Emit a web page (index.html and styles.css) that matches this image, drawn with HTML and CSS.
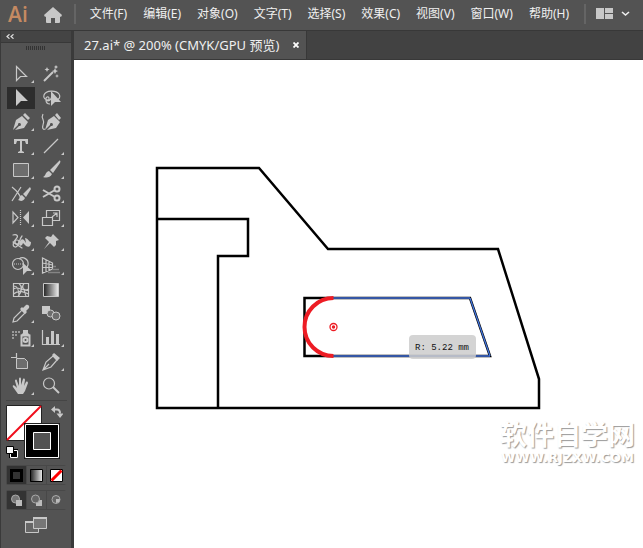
FILE: index.html
```html
<!DOCTYPE html>
<html lang="zh-CN">
<head>
<meta charset="utf-8">
<meta name="viewport" content="width=device-width, initial-scale=1">
<title>27.ai</title>
<link rel="stylesheet" href="styles.css">
</head>
<body>
<div class="app">
  <header class="menubar">
    <span class="logo">Ai</span>
    <button class="home" aria-label="主页"><svg width="18" height="16" viewBox="0 0 18 16"><path fill="#c8c8c8" d="M9 0 0 8l1 2 1-.6V15q0 1 1 1h4v-5h4v5h4q1 0 1-1V9.400l1 .6 1-2z"/></svg></button>
    <nav class="menus">
      <button>文件(F)</button><button>编辑(E)</button><button>对象(O)</button><button>文字(T)</button><button>选择(S)</button><button>效果(C)</button><button>视图(V)</button><button>窗口(W)</button><button>帮助(H)</button>
    </nav>
    <button class="workspace" aria-label="排列文档"><svg width="34" height="12" viewBox="0 0 34 12"><path fill="#c8c8c8" d="M0 0h8v11H0zM9 0h8v5H9zM9 6h8v5H9z"/><path fill="none" stroke="#eee" stroke-width="1.600" d="m26 4 3.500 3L33 4"/></svg></button>
  </header>
  <div class="body">
    <aside class="panel">
      <button class="collapse" aria-label="折叠"><svg width="8" height="5" viewBox="0 0 8 5"><path fill="none" stroke="#ddd" stroke-width="1.200" d="M3.500.3 1 2.500l2.500 2.200M7.500.3 5 2.500l2.500 2.200"/></svg></button>
      <div class="grip"></div>
      <div class="tools">
        <button aria-label="选择"><svg viewBox="0 0 30 24"><path class="l" d="M10.500 4.500v14l4-4h6z"/><path class="f" d="M28 18v3h-3z"/></svg></button>
        <button aria-label="魔棒"><svg viewBox="0 0 30 24"><path class="l w" d="m8 19 9-9"/><path class="f" d="m19 6 1 2.200L22 9l-2 1-1 2-1-2-2-1 2-.8zM11 5l.8 1.700 1.700.8-1.700.8L11 10l-.8-1.700-1.700-.8 1.700-.8zM20 3l.7 1.300L22 5l-1.300.7L20 7l-.7-1.300L18 5l1.300-.7zM21 12l.6 1.400L23 14l-1.400.6L21 16l-.6-1.400L19 14l1.400-.6z"/></svg></button>
        <button class="active" aria-label="直接选择"><svg viewBox="0 0 30 24"><path class="f" d="M10 3v17l5-5h7z"/></svg></button>
        <button aria-label="套索"><svg viewBox="0 0 30 24"><path class="l" d="M13 14c-4 0-6-2-5-5 2-5 12-5 15-1 2 3 0 5-2 6M12 15c2-2 1-5-1-4s-1 4 1 4 4-3 4-6"/><path class="l" d="M10 14c0 3 2 4 4 4"/><path class="f" d="M15 5v15l4-4h6z"/></svg></button>
        <button aria-label="钢笔"><svg viewBox="0 0 30 24"><path class="f" d="m7 20 3-10 6-4 6 6-4 6-9 2 4-4a1.500 1.500 0 1 0-1-1l-4 4zM17 5l2-2 5 5-2 2z"/><path class="f" d="M28 18v3h-3z"/></svg></button>
        <button aria-label="曲率"><svg viewBox="0 0 30 24"><path class="l" d="M7 4c-3 5 3 6 0 11-1 3 0 5 2 4"/><path class="f" d="m9 20 3-10 6-4 6 6-4 6-9 2 4-4a1.500 1.500 0 1 0-1-1l-4 4zM19 5l2-2 4 5-2 2z"/></svg></button>
        <button aria-label="文字"><svg viewBox="0 0 30 24"><path class="f" d="M8 5h14v5h-2l-1-3h-3v10l2 1v1h-6v-1l2-1V7h-3l-1 3H8z"/><path class="f" d="M28 18v3h-3z"/></svg></button>
        <button aria-label="直线段"><svg viewBox="0 0 30 24"><path class="l" d="M8 19 22 5"/><path class="f" d="M28 18v3h-3z"/></svg></button>
        <button aria-label="矩形"><svg viewBox="0 0 30 24"><path class="s" d="M7.500 5.500h15v13h-15z"/><path class="f" d="M28 18v3h-3z"/></svg></button>
        <button aria-label="画笔"><svg viewBox="0 0 30 24"><path class="f" d="m23 3-9 9 3 3 7-10c1-2 0-3-1-2zM13 13l3 3c-2 4-6 4-9 3 3-1 2-5 6-6z"/><path class="f" d="M28 18v3h-3z"/></svg></button>
        <button aria-label="Shaper"><svg viewBox="0 0 30 24"><path class="l" d="M6 5c5 4 8 7 9 12M15 5 6 19"/><path class="f" d="m24 5-7 7 3 3 5-8zM16 13l3 3c-2 4-5 3-7 2 2-1 1-4 4-5z"/><path class="f" d="M28 18v3h-3z"/></svg></button>
        <button aria-label="剪刀"><svg viewBox="0 0 30 24"><path class="l w" d="m7 8 12 7M7 15l12-7"/><circle class="l w" cx="21" cy="7" r="2.500"/><circle class="l w" cx="21" cy="16" r="2.500"/><path class="f" d="M28 18v3h-3z"/></svg></button>
        <button aria-label="镜像"><svg viewBox="0 0 30 24"><path class="l" d="M7 6v11l5-5.500z"/><path class="f" d="M23 5v13l-6-6.500z"/><path class="l d" d="M14.500 4v16"/><path class="f" d="M28 18v3h-3z"/></svg></button>
        <button aria-label="比例缩放"><svg viewBox="0 0 30 24"><path class="l" d="M10.500 12V4.500h13v10h-7M6.500 11.500h10v8h-10zM16 11l5-4m-4 0h4v4"/><path class="f" d="M28 18v3h-3z"/></svg></button>
        <button aria-label="宽度"><svg viewBox="0 0 30 24"><path class="l" stroke-linecap="round" d="M7 5c4-1 6 1 3 4s-4 7-1 8c4 1 4-8 7-11M7 12l9 6"/><circle class="l" cx="11" cy="12" r="2"/><path class="f" d="M13 14c1-4 3-6 5-4l2 3-1-5c3 0 4 4 6 4 0 4-2 6-5 4l-3-3c-1 3-3 4-4 1zM28 18v3h-3z"/></svg></button>
        <button aria-label="操控变形"><svg viewBox="0 0 30 24"><path class="f" d="m17 4 6 6-3 1v4l-2 2-4-4-6 6 5-7-4-4 2-2 4 1zM28 18v3h-3z"/></svg></button>
        <button aria-label="形状生成器"><svg viewBox="0 0 30 24"><circle class="l" cx="12" cy="10" r="5.500"/><path class="l" d="M13 5c4-3 10 0 9 6-1 3-2 4-3 5"/><path class="l d" d="M8 10h9"/><path class="f" d="M17 9v12l4-4h5zM28 18v3h-3z"/></svg></button>
        <button aria-label="透视网格"><svg viewBox="0 0 30 24"><path class="l" d="M6.500 4v15l10-4V9zM10 6v12M13 8v9M6.500 9l10 2M6.500 13.500l10 0"/><path stroke="#858585" stroke-width="1.500" d="M17 12.500h3M16 15.500h7M12 18.500h12"/><path class="f" d="M28 18v3h-3z"/></svg></button>
        <button aria-label="网格"><svg viewBox="0 0 30 24"><path class="l" d="M7.500 5.500h15v13h-15zM7.500 11c5-4 9 4 15 0M13 5.500c5 4 2 9-1 13M7.500 16c5-4 8-3 15 0M18 5.500c-3 4-1 7 4.500 7M8 8c4 0 5 4 5 10.500M19 11c-1 2 0 5 1 7"/></svg></button>
        <button aria-label="渐变"><svg viewBox="0 0 30 24"><defs><linearGradient id="ramp"><stop stop-color="#222"/><stop offset="1" stop-color="#eee"/></linearGradient></defs><path fill="url(#ramp)" stroke="#c8c8c8" d="M7.500 5.500h15v13h-15z"/></svg></button>
        <button aria-label="吸管"><svg viewBox="0 0 30 24"><path class="l" d="m7 20 1-4 8-8 3 3-8 8z"/><path class="f" d="m14 7 2-2 1 1 3-3c2-1 4 1 3 3l-3 3 1 1-2 2zM28 18v3h-3z"/></svg></button>
        <button aria-label="混合"><svg viewBox="0 0 30 24"><path class="f" d="M6 4h8v8H6z"/><circle class="s" cx="14.500" cy="11.500" r="3.500"/><circle class="s" cx="20" cy="14" r="4"/></svg></button>
        <button aria-label="符号喷枪"><svg viewBox="0 0 30 24"><path class="l w" d="M15.500 9.500h8v10h-8z"/><path class="f" d="M17 4h5v3l2 2h-9l2-2z"/><circle class="l w" cx="19.500" cy="14" r="2"/><path class="f dim" d="M6 5h2v2H6zm3 0h2v2H9zm3 0h2v2h-2zM6 8h2v2H6zm3 0h2v2H9zM6 11h2v2H6z"/><path class="f" d="M28 18v3h-3z"/></svg></button>
        <button aria-label="柱形图"><svg viewBox="0 0 30 24"><path class="l" d="M6.500 4v14.500H24"/><path class="f" d="M10 11h3v8h-3zM15 5h3v14h-3zM20 8h3v11h-3zM28 18v3h-3z"/></svg></button>
        <button aria-label="画板"><svg viewBox="0 0 30 24"><path class="l" d="M5 7.500h5.500M10.500 3v5"/><path class="s" d="M10.500 8.500h8l3 3v7h-11z"/></svg></button>
        <button aria-label="切片"><svg viewBox="0 0 30 24"><path class="l" d="m7 20 3-8 7-6 4 4-6 7zm0 0 6-6"/><path class="f" d="m16 5 2-2 6 5-3 3zM28 18v3h-3z"/></svg></button>
        <button aria-label="抓手"><svg viewBox="0 0 30 24"><path class="f" d="m12 20-5-7c-1-2 1-2 2-1l2 2-2-7c0-2 2-2 2 0l2 5V5c0-2 2-2 2 0v6l2-6c1-1 2 0 2 1l-1 6 2-4c1-1 2 0 2 1l-3 8-2 3zM28 18v3h-3z"/></svg></button>
        <button aria-label="缩放"><svg viewBox="0 0 30 24"><circle class="l" cx="13" cy="9.500" r="5.500"/><path class="l w" d="m17 13 6 6"/></svg></button>
      </div>
      <div class="paint">
        <button class="fill" aria-label="填色"><svg width="36" height="36" viewBox="0 0 36 36"><path fill="#fff" stroke="#222" d="M.5.5h35v35H.5z"/><path stroke="#f00d1b" stroke-width="2" d="M1 35 35 1"/></svg></button>
        <button class="stroke" aria-label="描边"><svg width="36" height="36" viewBox="0 0 36 36"><path stroke="#222" d="M.5.5h35v35H.5z"/><path stroke="#fff" d="M1.500 1.500h33v33h-33z"/><path fill="#535353" stroke="#fff" d="M9.500 9.500h17v17h-17z"/></svg></button>
        <button class="swap" aria-label="互换"><svg width="12" height="12" viewBox="0 0 12 12"><path class="l w" d="M3 3.500h3q3 0 3 4"/><path class="f" d="M0 3.500 4 0v7zM5.500 7.500h7L9 12z"/></svg></button>
        <button class="reset" aria-label="默认"><svg width="12" height="12" viewBox="0 0 12 12"><path fill="#000" d="M3 3h9v9H3z"/><path stroke="#fff" d="M4.500 4.500h7v7h-7z"/><path fill="#fff" stroke="#000" d="M.5.5h7v7h-7z"/></svg></button>
      </div>
      <div class="modes">
        <button class="active" aria-label="颜色"><svg viewBox="0 0 19 18"><path fill="#333" stroke="#000" stroke-width="3" d="M4.500 4.500h10v10h-10z"/></svg></button>
        <button aria-label="渐变"><svg viewBox="0 0 19 18"><path fill="url(#ramp)" stroke="#000" d="M3.500 3.500h12v12h-12z"/></svg></button>
        <button aria-label="无"><svg viewBox="0 0 19 18"><path fill="#fff" stroke="#000" d="M3.500 3.500h12v12h-12z"/><path stroke="red" stroke-width="3" d="M4.500 14.500l10-10"/></svg></button>
      </div>
      <div class="modes">
        <button class="active" aria-label="正常绘图"><svg viewBox="0 0 19 18"><circle fill="#777" stroke="#aaa" cx="8.500" cy="8" r="4"/><path fill="#bbb" d="M9 9h6v6H9z"/></svg></button>
        <button aria-label="背面绘图"><svg viewBox="0 0 19 18"><path fill="#bbb" d="M9 9h6v6H9z"/><circle fill="#666" stroke="#aaa" cx="8.500" cy="8" r="4"/></svg></button>
        <button aria-label="内部绘图"><svg viewBox="0 0 19 18"><circle fill="#666" stroke="#aaa" cx="9" cy="8.500" r="4"/><path fill="#bbb" d="M9 8h4l-1 3-3 1z"/></svg></button>
      </div>
      <button class="screen" aria-label="屏幕模式"><svg width="22" height="16" viewBox="0 0 22 16"><path fill="#666" stroke="#c8c8c8" d="M.5 4.500h13v11H.5z"/><path stroke="#c8c8c8" stroke-width="2" d="M0 5h13"/><path fill="#777" stroke="#c8c8c8" d="M8.500.5h13v11h-13z"/><path stroke="#c8c8c8" stroke-width="2" d="M8 1h14"/></svg></button>
    </aside>
    <main class="document">
      <div class="tabs"><div class="tab"><span>27.ai* @ 200% (CMYK/GPU 预览)</span><button aria-label="关闭"><svg width="6" height="6" viewBox="0 0 6 6"><path stroke="#fff" stroke-width="1.800" d="m.5.5 5 5m0-5-5 5"/></svg></button></div></div>
      <div class="canvas">
        <svg class="art" width="569" height="488" viewBox="74 60 569 488">
          <g fill="none" stroke="#000" stroke-width="2.500">
            <path d="M157 168h102l69 81h170l41 130v29H157zM157 219h91v37h-30v152"/>
            <path d="M304.500 298H470l20 58H304.500z"/>
          </g>
          <path fill="none" stroke="#3557a5" stroke-width="2" d="M333 298h137"/>
          <path fill="none" stroke="#3557a5" stroke-width="2" d="M333 356h157"/>
          <path fill="none" stroke="#4477e0" stroke-width="1.300" d="m470 298 20 58"/>
          <path fill="none" stroke="#ed1c24" stroke-width="4" d="M333.500 298a29 29 0 0 0 0 58"/>
          <circle fill="none" stroke="#ed1c24" stroke-width="1.300" cx="333.500" cy="327" r="3.500"/><circle fill="#ed1c24" cx="333.500" cy="327" r="1.700"/>
        </svg>
        <output class="measure">R: 5.22 mm</output>
        <div class="watermark"><strong>软件自学网</strong><span>WWW.RJZXW.COM</span></div>
      </div>
    </main>
  </div>
</div>
</body>
</html>
```
FILE: styles.css
```css
* { box-sizing: border-box; }
body { margin: 0; background: #424242; color: #f0f0f0; font: 12px/16px "Noto Sans", "Noto Sans CJK SC", sans-serif; }
button { padding: 0; border: 0; background: none; color: inherit; font: inherit; white-space: nowrap; }
svg { display: block; fill: none; }
.app { display: flex; flex-direction: column; min-height: 100vh; }

.menubar { display: flex; align-items: center; height: 31px; padding: 0 12px 3px 8px; background: #535353; border-bottom: 1px solid #383838; }
.logo { color: #c58a62; font: 600 21px/24px "Open Sans", sans-serif; }
.home { margin: 3px 12px 0 16px; }
.menus { display: flex; gap: 16px; padding: 2px 15px 2px 14px; border: solid #656565; border-width: 0 2px; }
.workspace { margin-left: 10px; }

.body { display: flex; flex: 1; }
.panel { flex: none; width: 74px; background: #535353; border: solid #3a3a3a; border-width: 0 3px 0 1px; }
.collapse { display: flex; align-items: center; width: 100%; height: 12px; padding-left: 5px; background: #444; border-bottom: 1px solid #383838; }
.grip { width: 20px; height: 4px; margin: 3px 0 0 25px; background: repeating-linear-gradient(90deg, #333 0 1px, #535353 1px 2px); }
.tools { display: grid; grid-template-columns: 30px 30px; grid-auto-rows: 24px; margin: 12px 0 0 5px; }
.tools svg { width: 30px; height: 24px; }
.tools .active { background: linear-gradient(#2d2d2d, #2d2d2d) center / 28px 22px no-repeat; }
.f { fill: #c8c8c8; }
.l { stroke: #c8c8c8; stroke-width: 1.200; }
.w { stroke-width: 2; }
.d { stroke-dasharray: 1 1; }
.s { fill: #6d6d6d; stroke: #c8c8c8; }
.dim { opacity: .6; }

.paint { position: relative; height: 60px; margin: 2px 4px 0 5px; border-top: 1px solid #454545; }
.paint button { position: absolute; }
.paint .fill { left: 0; top: 4px; }
.paint .stroke { left: 18px; top: 22px; }
.paint .stroke svg { background: #000; }
.paint .swap { right: 4px; top: 5px; }
.paint .reset { left: 0; top: 45px; }

.modes { display: flex; gap: 1px; width: 60px; height: 20px; margin: 5px 0 4px 5px; padding: 1px; background: #484848; border-radius: 2px; }
.modes button { flex: 1; background: #535353; }
.modes .active { background: #333; }
.modes svg { width: 19px; height: 18px; }
.screen { margin: 3px 0 0 24px; }

.document { display: flex; flex: 1; flex-direction: column; min-width: 0; }
.tabs { display: flex; height: 29px; border-bottom: 1px solid #383838; }
.tab { display: flex; align-items: center; gap: 14px; padding: 0 7px 0 10px; background: #535353; border-right: 1px solid #383838; font-size: 13px; }
.canvas { position: relative; flex: 1; overflow: hidden; background: #fff; }
.measure { position: absolute; left: 335px; top: 275px; padding: 5px 7px 3px 6px; border-radius: 4px; background: rgb(205 205 205 / 85%); color: #111; font: 9px/16px "Liberation Mono", monospace; }
.watermark { position: absolute; right: 8px; bottom: 84px; display: flex; flex-direction: column; align-items: center; gap: 4px; color: #fff; text-shadow: 1px 1px 1px #999; }
.watermark strong { font: bold 27px/28px "Noto Sans CJK SC", sans-serif; }
.watermark span { font: bold 13px/12px "DejaVu Sans", sans-serif; }
```
